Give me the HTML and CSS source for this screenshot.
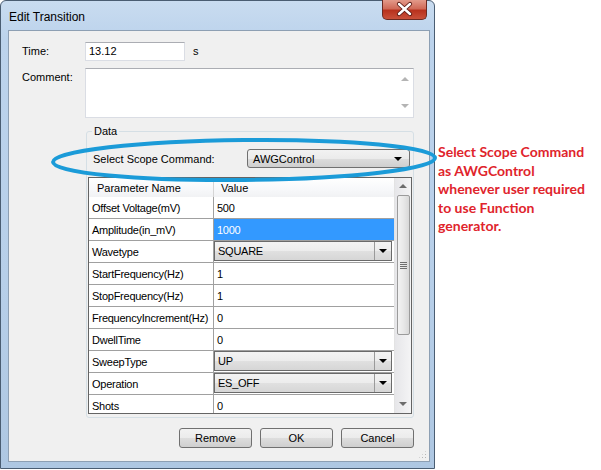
FILE: index.html
```html
<!DOCTYPE html>
<html lang="en">

<head>
    <meta charset="UTF-8">
    <title>Edit Transition</title>
    <link rel="stylesheet" href="styles.css">
</head>

<body>
    <div class="page">
        <div class="window">
            <div class="titlebar">
                <span class="title">Edit Transition</span>
                <div class="close">
                    <svg width="45" height="20" viewBox="0 0 45 20">
                        <path d="M17 5 L28 15 M28 5 L17 15" stroke="#5a1a14" stroke-width="4.2" stroke-linecap="round" />
                        <path d="M17 5 L28 15 M28 5 L17 15" stroke="#fff" stroke-width="2.4" stroke-linecap="round" />
                    </svg>
                </div>
            </div>
            <div class="client">
                <div class="field time-row">
                    <span class="label">Time:</span>
                    <div class="textbox time-box">13.12</div>
                    <span class="unit">s</span>
                </div>
                <div class="field comment-row">
                    <span class="label">Comment:</span>
                    <div class="textbox memo">
                        <div class="memo-text"></div>
                        <div class="memo-scroll">
                            <span class="tri up light"></span>
                            <span class="tri down light"></span>
                        </div>
                    </div>
                </div>
                <fieldset class="group">
                    <legend>Data</legend>
                    <div class="cmd-row">
                        <span class="cmd-label">Select Scope Command:</span>
                        <div class="combo cmd-combo">
                            <span class="combo-text">AWGControl</span>
                            <span class="tri down"></span>
                        </div>
                    </div>
                    <div class="grid">
                        <div class="grid-body">
                            <div class="row head">
                                <div class="cell">Parameter Name</div>
                                <div class="cell">Value</div>
                            </div>
                            <div class="row">
                                <div class="cell">Offset Voltage(mV)</div>
                                <div class="cell">500</div>
                            </div>
                            <div class="row">
                                <div class="cell">Amplitude(in_mV)</div>
                                <div class="cell selected">1000</div>
                            </div>
                            <div class="row">
                                <div class="cell">Wavetype</div>
                                <div class="cell combo-cell">
                                    <div class="combo in-grid"><span class="combo-text">SQUARE</span><span class="drop"><span class="tri down"></span></span></div>
                                </div>
                            </div>
                            <div class="row">
                                <div class="cell">StartFrequency(Hz)</div>
                                <div class="cell">1</div>
                            </div>
                            <div class="row">
                                <div class="cell">StopFrequency(Hz)</div>
                                <div class="cell">1</div>
                            </div>
                            <div class="row">
                                <div class="cell">FrequencyIncrement(Hz)</div>
                                <div class="cell">0</div>
                            </div>
                            <div class="row">
                                <div class="cell">DwellTime</div>
                                <div class="cell">0</div>
                            </div>
                            <div class="row">
                                <div class="cell">SweepType</div>
                                <div class="cell combo-cell">
                                    <div class="combo in-grid"><span class="combo-text">UP</span><span class="drop"><span class="tri down"></span></span></div>
                                </div>
                            </div>
                            <div class="row">
                                <div class="cell">Operation</div>
                                <div class="cell combo-cell">
                                    <div class="combo in-grid"><span class="combo-text">ES_OFF</span><span class="drop"><span class="tri down"></span></span></div>
                                </div>
                            </div>
                            <div class="row">
                                <div class="cell">Shots</div>
                                <div class="cell">0</div>
                            </div>
                        </div>
                        <div class="vscroll">
                            <span class="tri up gray"></span>
                            <div class="thumb"><span class="grip-lines"></span></div>
                            <span class="tri down gray"></span>
                        </div>
                    </div>
                </fieldset>
                <div class="buttons">
                    <div class="btn">Remove</div>
                    <div class="btn">OK</div>
                    <div class="btn">Cancel</div>
                </div>
                <div class="size-grip"></div>
            </div>
        </div>
        <div class="note">
            Select Scope Command<br>
            as AWGControl<br>
            whenever user required<br>
            to use Function<br>
            generator.
        </div>
        <svg class="callout" width="601" height="470" viewBox="0 0 601 470">
            <ellipse cx="244" cy="160" rx="191" ry="20" fill="none" stroke="#1b9bd8" stroke-width="4" transform="rotate(-0.6 244 160)" />
        </svg>
    </div>
</body>

</html>
```

FILE: styles.css
```css
html, body {
    margin: 0;
    padding: 0;
    background: #fff;
}

.page {
    position: relative;
    width: 601px;
    height: 470px;
    display: flex;
    font-family: "Liberation Sans", Arial, sans-serif;
    font-size: 11px;
    color: #000;
}

/* dialog frame */
.window {
    width: 435px;
    height: 469px;
    box-sizing: border-box;
    border: 1px solid #4a5d72;
    border-radius: 6px 6px 0 0;
    padding: 0 4px 6px 7px;
    background: linear-gradient(180deg, #c9dcf0 0%, #bcd3ec 8%, #b7cfe9 60%, #aec7e2 100%);
    display: flex;
    flex-direction: column;
}

.titlebar {
    height: 29px;
    display: flex;
    justify-content: space-between;
    align-items: flex-start;
}

.title {
    font-size: 12px;
    margin: 9px 0 0 1px;
    color: #000;
}

.close {
    width: 45px;
    height: 20px;
    margin: -1px 3px 0 0;
    border: 1px solid #6b2a22;
    border-top: none;
    border-radius: 0 0 5px 5px;
    box-sizing: border-box;
    background: linear-gradient(180deg, #e39a8a 0%, #d06a58 45%, #b8321e 55%, #c9503a 100%);
}

.close svg {
    display: block;
    margin: -1px 0 0 -1px;
}

.client {
    position: relative;
    flex: 1;
    background: #f0f0f0;
    border: 1px solid #8d9fb3;
    padding: 11px 15px 13px 13px;
    display: flex;
    flex-direction: column;
}

.field {
    display: flex;
}

.label {
    width: 63px;
    flex-shrink: 0;
    padding-top: 3px;
}

.textbox {
    background: #fff;
    border: 1px solid #dadde4;
    border-top-color: #abadb3;
    box-sizing: border-box;
}

.time-box {
    width: 100px;
    height: 19px;
    padding: 2px 3px;
}

.unit {
    margin-left: 8px;
    padding-top: 3px;
}

.comment-row {
    margin-top: 7px;
}

.memo {
    width: 329px;
    height: 50px;
    display: flex;
}

.memo-text {
    flex: 1;
}

.memo-scroll {
    width: 17px;
    display: flex;
    flex-direction: column;
    justify-content: space-between;
    align-items: center;
    padding: 8px 0 9px;
}

/* small triangles */
.tri {
    width: 0;
    height: 0;
    border-left: 4px solid transparent;
    border-right: 4px solid transparent;
}

.tri.down {
    border-top: 4px solid #000;
}

.tri.up {
    border-bottom: 4px solid #000;
}

.tri.light.up {
    border-bottom-color: #b4b4b4;
}

.tri.light.down {
    border-top-color: #b4b4b4;
}

.tri.gray.up {
    border-bottom-color: #6c6c6c;
}

.tri.gray.down {
    border-top-color: #6c6c6c;
}

/* Data group */
.group {
    margin: 7px 0 0 64px;
    padding: 0 0 3px;
    border: 1px solid #d5dfe5;
    border-radius: 3px;
    min-width: 0;
}

.group legend {
    margin-left: 5px;
    padding: 0 2px;
    line-height: 12px;
}

.cmd-row {
    display: flex;
    align-items: center;
    margin-top: 12px;
    padding: 0 3px 0 6px;
}

.cmd-label {
    width: 154px;
}

.combo {
    display: flex;
    align-items: center;
    box-sizing: border-box;
    border: 1px solid #707070;
    border-radius: 3px;
    background: linear-gradient(180deg, #f2f2f2 0%, #ebebeb 50%, #dddddd 51%, #cfcfcf 100%);
}

.cmd-combo {
    flex: 1;
    height: 19px;
    padding: 0 7px 0 5px;
}

.combo-text {
    flex: 1;
}

/* parameter grid */
.grid {
    margin: 9px 1px 0;
    height: 237px;
    box-sizing: border-box;
    border: 1px solid #646464;
    display: flex;
    overflow: hidden;
}

.grid-body {
    flex: 1;
    background: #fff;
}

.row {
    display: grid;
    grid-template-columns: 125px 1fr;
    height: 22px;
    box-sizing: border-box;
    border-bottom: 1px solid #a0a0a0;
}

.row .cell {
    padding: 0 3px;
    display: flex;
    align-items: center;
    white-space: nowrap;
    overflow: hidden;
    letter-spacing: -0.25px;
    color: #000;
}

.row .cell:first-child {
    border-right: 1px solid #a0a0a0;
}

.row.head {
    height: 19px;
    border-bottom: none;
    background: linear-gradient(180deg, #ffffff 0%, #f7f8fa 60%, #f1f2f4 100%);
}

.row.head .cell {
    padding-left: 8px;
    border-right: 1px solid #d5d5d5;
    letter-spacing: 0;
}

.row.head .cell:last-child {
    padding-left: 7px;
    border-right: none;
}

.row .selected {
    background: #3399ff;
    color: #fff;
}

.row .combo-cell {
    padding: 0 2px 0 0;
    align-items: stretch;
}

.combo.in-grid {
    flex: 1;
    border-radius: 0;
    margin: 0 0 1px;
    padding-left: 3px;
    border-color: #6a6a6a;
    background: linear-gradient(180deg, #f3f3f3 0%, #ececec 50%, #e0e0e0 51%, #d6d6d6 100%);
}

.drop {
    width: 16px;
    align-self: stretch;
    border-left: 1px solid #9a9a9a;
    display: flex;
    align-items: center;
    justify-content: center;
}

.vscroll {
    width: 17px;
    background: linear-gradient(90deg, #e6e6e9 0%, #f4f4f5 100%);
    border-left: 1px solid #e3e3e3;
    display: flex;
    flex-direction: column;
    align-items: center;
    padding: 6px 0 7px;
    box-sizing: border-box;
}

.thumb {
    width: 13px;
    height: 140px;
    margin: 7px 0 auto;
    box-sizing: border-box;
    border: 1px solid #9b9b9b;
    border-radius: 2px;
    background: linear-gradient(90deg, #f3f3f3 0%, #e8e8e8 50%, #d8d8d8 100%);
    display: flex;
    align-items: center;
    justify-content: center;
}

.grip-lines {
    width: 7px;
    height: 7px;
    background: repeating-linear-gradient(180deg, #6f6f6f 0, #6f6f6f 1px, transparent 1px, transparent 2px);
}

/* dialog buttons */
.buttons {
    display: flex;
    justify-content: flex-end;
    gap: 8px;
    margin-top: 10px;
}

.btn {
    width: 73px;
    height: 20px;
    box-sizing: border-box;
    border: 1px solid #707070;
    border-radius: 3px;
    background: linear-gradient(180deg, #f2f2f2 0%, #ebebeb 50%, #dddddd 51%, #cfcfcf 100%);
    display: flex;
    align-items: center;
    justify-content: center;
}

.size-grip {
    position: absolute;
    right: 2px;
    bottom: 2px;
    width: 9px;
    height: 9px;
    background-image: radial-gradient(circle, #b5b5b5 0.8px, transparent 1px);
    background-size: 3px 3px;
    clip-path: polygon(100% 0, 100% 100%, 0 100%);
}

/* annotation */
.note {
    padding: 143px 0 0 3px;
    font-family: Lato, "Liberation Sans", sans-serif;
    font-weight: bold;
    font-size: 14px;
    line-height: 18.5px;
    color: #e0242c;
    white-space: nowrap;
}

.callout {
    position: absolute;
    left: 0;
    top: 0;
    pointer-events: none;
}
```
